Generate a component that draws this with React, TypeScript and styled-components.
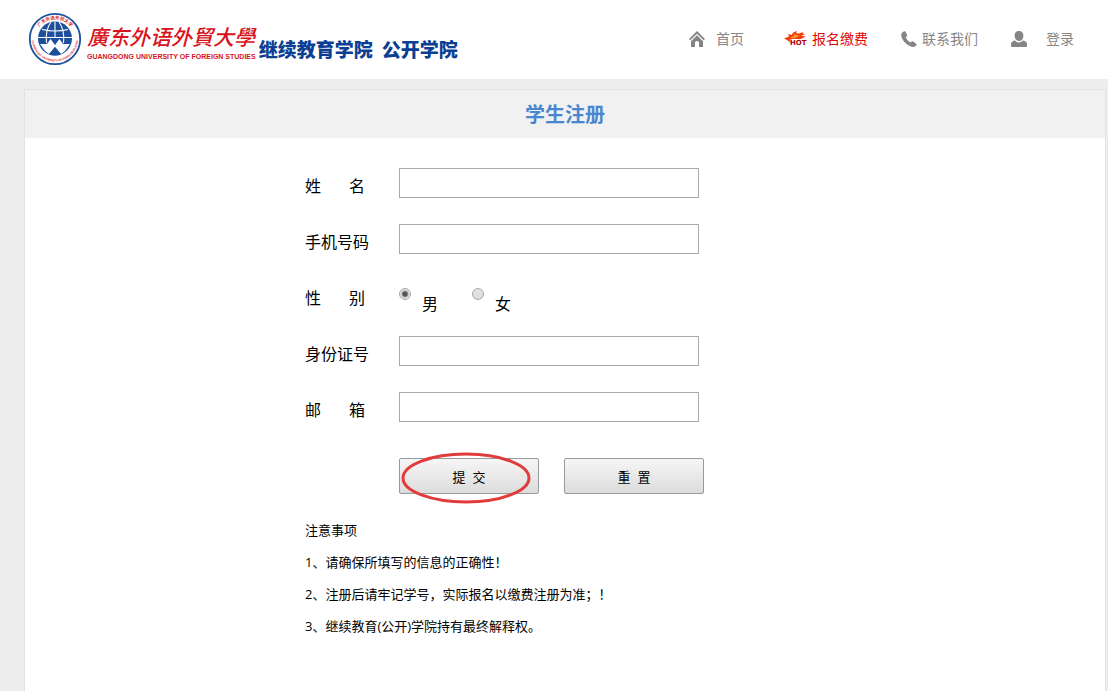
import React from 'react';
import styled, { createGlobalStyle } from 'styled-components';

const GlobalStyle = createGlobalStyle`
  * { box-sizing: border-box; }
  body {
    margin: 0;
    background: #ededed;
    color: #000;
    font-family: "Open Sans", "Noto Sans CJK SC", sans-serif;
    font-size: 16px;
  }
`;

const Page = styled.div`
  min-height: 100vh;
  display: flex;
  flex-direction: column;
`;

const Header = styled.header`
  display: flex;
  align-items: center;
  justify-content: space-between;
  height: 79px;
  padding: 0 34px 2px 28px;
  background: #fff;
`;

const Brand = styled.a`
  display: flex;
  align-items: center;
  text-decoration: none;
  white-space: nowrap;
`;

const University = styled.span`
  display: flex;
  flex-direction: column;
  gap: 2px;
  margin: 4px 3px 0 5px;
  color: #d8131b;
`;

const UniversityName = styled.span`
  font-family: "Noto Sans CJK SC", sans-serif;
  font-size: 21px;
  font-style: italic;
  font-weight: 500;
  line-height: 30px;
`;

const UniversityEnglish = styled.span`
  font-family: "Liberation Sans", sans-serif;
  font-size: 7px;
  font-weight: 700;
  line-height: 8px;
`;

const College = styled.span`
  display: flex;
  gap: 9px;
  margin-top: 20px;
  color: #0c3f94;
  font-family: "Noto Sans CJK SC", sans-serif;
  font-size: 19px;
  font-weight: 900;
  line-height: 24px;
`;

const Nav = styled.nav`
  display: flex;
  align-items: center;
  gap: 33px;
`;

const NavLink = styled.a<{ $gap: number; $hot?: boolean }>`
  display: flex;
  align-items: center;
  gap: ${(p) => p.$gap}px;
  color: ${(p) => (p.$hot ? '#dd0a0a' : '#858585')};
  font-size: 14px;
  line-height: 20px;
  text-decoration: none;
  white-space: nowrap;
`;

const Panel = styled.main`
  flex: 1;
  margin: 10px 2px 0 24px;
  border: 1px solid #e2e2e2;
  border-bottom: 0;
  background: #fff;
`;

const Title = styled.h1`
  margin: 0;
  padding-top: 2px;
  background: #f1f1f1;
  color: #4a86d0;
  font-size: 20px;
  font-weight: 700;
  line-height: 46px;
  text-align: center;
`;

const Form = styled.form`
  width: 520px;
  max-width: 100%;
  margin: 0 auto;
  padding: 30px 0 40px;
`;

const Row = styled.div`
  display: grid;
  grid-template-columns: 94px 1fr;
  align-items: start;
  min-height: 36px;
  margin-bottom: 20px;
`;

const Label = styled.label`
  display: flex;
  gap: 28px;
  line-height: 36px;
`;

const TextBox = styled.input`
  width: 300px;
  height: 30px;
  padding: 0 6px;
  border: 1px solid #a9a9a9;
  background: #fff;
  font: inherit;
`;

const Choices = styled.div`
  display: flex;
  gap: 34px;
`;

const Choice = styled.label`
  display: flex;
  align-items: flex-start;
  gap: 11px;
  line-height: 24px;
`;

const ChoiceText = styled.span`
  padding-top: 12px;
`;

const Radio = styled.input`
  appearance: none;
  width: 12px;
  height: 12px;
  margin: 8px 0 0;
  border: 1px solid #a8a8a8;
  border-radius: 50%;
  background: linear-gradient(#e4e4e4, #dcdcdc);
  &:checked {
    background: radial-gradient(circle, #555 0 2px, #e4e4e4 4px);
  }
`;

const Actions = styled.div`
  display: flex;
  gap: 25px;
  margin: 30px 0 20px 94px;
`;

const Marked = styled.div`
  position: relative;
`;

const Button = styled.button`
  width: 140px;
  height: 36px;
  padding: 0;
  border: 1px solid #999;
  border-radius: 2px;
  background: linear-gradient(#f6f6f6, #dcdcdc);
  color: #000;
  font-family: inherit;
  font-size: 13px;
  white-space: pre;
`;

const Ring = styled.svg`
  position: absolute;
  top: -6px;
  left: 2px;
  pointer-events: none;
`;

const Notes = styled.section`
  font-size: 13px;
  line-height: 32px;
  p { margin: 0; }
`;

const Seal = () => (
  <svg width="54" height="54" viewBox="0 0 54 54" aria-hidden="true">
    <defs>
      <path id="seal-top" d="M7.4 27 A19.6 19.6 0 0 1 46.6 27" />
      <path id="seal-bottom" d="M3.8 24 A23.3 23.3 0 1 0 50.2 24" />
    </defs>
    <circle cx="27" cy="27" r="25.2" fill="#fff" stroke="#1d4f9c" strokeWidth="1.8" />
    <text fill="#d8232a" fontFamily="Noto Sans CJK SC, sans-serif" fontSize="4.5" fontWeight="700">
      <textPath href="#seal-top" startOffset="50%" textAnchor="middle">广东外语外贸大学</textPath>
    </text>
    <text fill="#d8232a" fontFamily="Liberation Sans, sans-serif" fontSize="2.8" fontWeight="700">
      <textPath href="#seal-bottom" startOffset="50%" textAnchor="middle">
        GUANGDONG UNIVERSITY OF FOREIGN STUDIES
      </textPath>
    </text>
    <circle cx="27" cy="26.500" r="17" fill="#1d4f9c" />
    <g fill="none" stroke="#fff" strokeWidth="1.1">
      <path d="M14 17.500 Q27 20.500 40 17.500" />
      <path d="M10 25.500 H44" />
      <path d="M27 9.500 V25" />
      <path d="M23 10 Q17 18 18.500 31" />
      <path d="M31 10 Q37 18 35.500 31" />
    </g>
    <path
      d="M12 32 L19 32 L22.500 27 L27 33 L31.500 27 L35 32 L42 32 L37 39 L33 42 L27 35 L21 42 L17 39 Z"
      fill="#fff"
    />
    <path d="M27 35 L33 42.500 Q27 44.500 21 42.500 Z" fill="#1d4f9c" />
  </svg>
);

const HomeIcon = () => (
  <svg width="16" height="16" viewBox="0 0 16 16" fill="#858585" aria-hidden="true">
    <path d="M8 0 L16 8 L14.700 9.300 L8 2.700 L1.300 9.300 L0 8 Z" />
    <path d="M8 4.300 L14 10.200 V16 H10 V11.500 Q10 10 8 10 Q6 10 6 11.500 V16 H2 V10.200 Z" />
  </svg>
);

const HotIcon = () => (
  <svg width="32" height="16" viewBox="0 0 32 16" aria-hidden="true">
    <path
      d="M7 7.500 L12 5.500 L11 3 L15 4 Q15 1 20 0 Q18.500 2 20 2.600 Q23 2.600 26 1 Q25 3 28 3.200 L24 5 L29 5.200 L24 8 H15 L14 13.500 Q12.500 9.500 7 7.500 Z"
      fill="#ee3d10"
    />
    <path d="M13 6.500 Q17 6 18 2.500 Q19 5 23 4.200 Q20 7 16 7.500 Z" fill="#ff9a24" />
    <text
      x="13"
      y="14"
      fill="#b50008"
      stroke="#fff"
      strokeWidth="0.8"
      paintOrder="stroke"
      fontFamily="DejaVu Sans, sans-serif"
      fontSize="7"
      fontWeight="700"
    >
      HOT
    </text>
  </svg>
);

const PhoneIcon = () => (
  <svg width="16" height="16" viewBox="0 0 16 16" fill="#858585" aria-hidden="true">
    <path d="M3.200 0.300 Q4.200 0 4.700 1 L6.100 4 Q6.400 4.800 5.700 5.400 L4.700 6.300 Q5.700 9.300 9.200 11.500 L10.700 10.500 Q11.400 10.100 12.100 10.600 L15.200 12.700 Q16 13.300 15.400 14.200 Q14.200 16 12 15.900 Q7.500 15.500 3.600 11.300 Q0 7.200 0.200 3.200 Q0.600 1.100 3.200 0.300 Z" />
  </svg>
);

const UserIcon = () => (
  <svg width="16" height="16" viewBox="0 0 16 16" fill="#858585" aria-hidden="true">
    <path d="M8 0 C10.900 0 12.400 2 12.400 4.700 C12.400 7.700 10.400 10 8 10 C5.600 10 3.600 7.700 3.600 4.700 C3.600 2 5.100 0 8 0 Z" />
    <path d="M4 9.500 Q5.800 11.500 8 11.500 Q10.200 11.500 12 9.500 Q16 10.500 16 13 V15 Q16 16 15 16 H1 Q0 16 0 15 V13 Q0 10.500 4 9.500 Z" />
  </svg>
);

type FieldProps = { id: string; parts: string[]; type?: string };

const Field = ({ id, parts, type = 'text' }: FieldProps) => (
  <Row>
    <Label htmlFor={id}>
      {parts.map((part) => (
        <span key={part}>{part}</span>
      ))}
    </Label>
    <TextBox id={id} name={id} type={type} />
  </Row>
);

export default function App() {
  return (
    <Page>
      <GlobalStyle />
      <Header>
        <Brand href="#">
          <Seal />
          <University>
            <UniversityName>廣东外语外貿大學</UniversityName>
            <UniversityEnglish>GUANGDONG UNIVERSITY OF FOREIGN STUDIES</UniversityEnglish>
          </University>
          <College>
            <span>继续教育学院</span>
            <span>公开学院</span>
          </College>
        </Brand>
        <Nav>
          <NavLink href="#" $gap={11}><HomeIcon />首页</NavLink>
          <NavLink href="#" $gap={3} $hot><HotIcon />报名缴费</NavLink>
          <NavLink href="#" $gap={5}><PhoneIcon />联系我们</NavLink>
          <NavLink href="#" $gap={19}><UserIcon />登录</NavLink>
        </Nav>
      </Header>
      <Panel>
        <Title>学生注册</Title>
        <Form onSubmit={(e) => e.preventDefault()}>
          <Field id="name" parts={['姓', '名']} />
          <Field id="phone" parts={['手机号码']} type="tel" />
          <Row role="radiogroup" aria-labelledby="gender-label">
            <Label as="span" id="gender-label">
              <span>性</span>
              <span>别</span>
            </Label>
            <Choices>
              <Choice>
                <Radio type="radio" name="gender" value="male" defaultChecked />
                <ChoiceText>男</ChoiceText>
              </Choice>
              <Choice>
                <Radio type="radio" name="gender" value="female" />
                <ChoiceText>女</ChoiceText>
              </Choice>
            </Choices>
          </Row>
          <Field id="idcard" parts={['身份证号']} />
          <Field id="email" parts={['邮', '箱']} type="email" />
          <Actions>
            <Marked>
              <Button type="submit">提{'  '}交</Button>
              <Ring width="130" height="52" viewBox="0 0 130 52" aria-hidden="true">
                <ellipse cx="65" cy="26" rx="63" ry="24" fill="none" stroke="#e23b3b" strokeWidth="3" />
              </Ring>
            </Marked>
            <Button type="reset">重{'  '}置</Button>
          </Actions>
          <Notes>
            <p>注意事项</p>
            <p>1、请确保所填写的信息的正确性！</p>
            <p>2、注册后请牢记学号，实际报名以缴费注册为准；！</p>
            <p>3、继续教育(公开)学院持有最终解释权。</p>
          </Notes>
        </Form>
      </Panel>
    </Page>
  );
}
